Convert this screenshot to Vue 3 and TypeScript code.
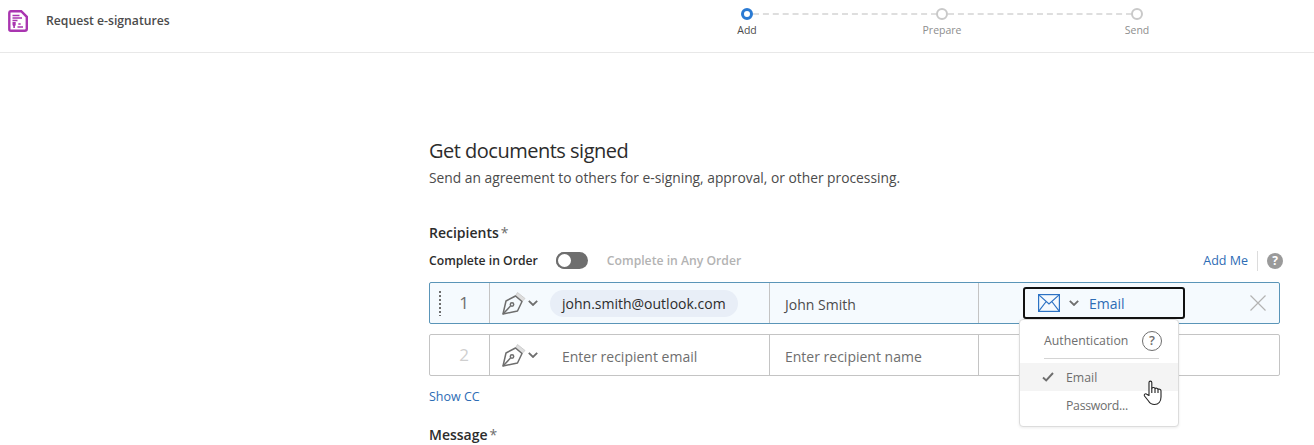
<script setup lang="ts">
const steps = [
  { label: 'Add', active: true },
  { label: 'Prepare', active: false },
  { label: 'Send', active: false },
]
</script>

<template>
  <div class="page">
    <header class="topbar">
      <svg class="doc-icon" width="20" height="22" viewBox="0 0 20 22" fill="none">
        <path d="M2.700 1.200h10.500l5.600 5.600v12a2 2 0 0 1-2 2h-14a1.500 1.500 0 0 1-1.500-1.500v-16.600a1.500 1.500 0 0 1 1.400-1.500z" stroke="#a935b0" stroke-width="2.400" fill="#fff" />
        <path d="M4.500 5.500h7M4.500 8h9.500M4.500 10.500h5M9.500 17h5.500" stroke="#a935b0" stroke-width="1.300" />
        <path d="M4.500 12h3.200v3l-.8 1.200v1.800h-1.600v-1.800l-.8-1.200z" fill="#a935b0" />
        <path d="M10.500 13l2 2M12.500 13l-2 2" stroke="#a935b0" stroke-width="1" />
      </svg>
      <span class="title">Request e-signatures</span>
      <div class="stepper">
        <div v-for="(s, i) in steps" :key="s.label" class="step" :class="{ on: s.active, last: i === steps.length - 1 }">
          <span class="dot"></span>
          <span class="step-label">{{ s.label }}</span>
        </div>
      </div>
    </header>

    <main class="content">
      <h1>Get documents signed</h1>
      <p class="sub">Send an agreement to others for e-signing, approval, or other processing.</p>

      <div class="section-label recipients">Recipients<span class="star">*</span></div>

      <div class="order-row">
        <span class="order on">Complete in Order</span>
        <span class="toggle"><span class="knob"></span></span>
        <span class="order off">Complete in Any Order</span>
        <div class="order-right">
          <a class="link add-me">Add Me</a>
          <span class="help-fill">?</span>
        </div>
      </div>

      <div class="row selected">
        <div class="cell num">
          <span class="grip"></span>
          <span class="n">1</span>
        </div>
        <div class="cell email">
          <svg class="pen" width="24" height="24" viewBox="0 0 24 24" fill="none" stroke="#6e6e6e" stroke-width="1.500">
            <path d="M13.500 5l2-3.500 7.500 6-3 3z" fill="#dedede" stroke="#cfcfcf" stroke-width="1" stroke-linejoin="round" />
            <path d="M1 23L4 10l9.500-5 6.500 5.500L15.500 20z" stroke-linejoin="round" />
            <path d="M1 23l7.500-8" />
            <circle cx="10" cy="13.500" r="1.700" />
          </svg>
          <svg class="chev" width="10" height="6" viewBox="0 0 10 6" fill="none"><path d="M.8.800L5 5 9.200.8" stroke="#6e6e6e" stroke-width="1.800" /></svg>
          <span class="chip">john.smith@outlook.com</span>
        </div>
        <div class="cell name"><span class="value">John Smith</span></div>
        <div class="cell auth">
          <svg class="close" width="16" height="16" viewBox="0 0 16 16" fill="none"><path d="M.5.500l15 15M15.500.5L.5 15.500" stroke="#b3b3b3" stroke-width="1.200" /></svg>
        </div>

        <div class="auth-button">
          <svg width="22" height="18" viewBox="0 0 22 18" fill="none" stroke="#2c72c4" stroke-width="1.200">
            <rect x=".6" y=".6" width="20.800" height="16.800" />
            <path d="M.6.600L11 10 21.400.6M.6 17.400l7.600-9.900M21.400 17.400l-7.600-9.900" />
          </svg>
          <svg class="chev" width="10" height="6" viewBox="0 0 10 6" fill="none"><path d="M.8.800L5 5 9.200.8" stroke="#6e6e6e" stroke-width="1.800" /></svg>
          <span class="auth-text">Email</span>
        </div>

        <div class="menu">
          <div class="menu-head">
            <span>Authentication</span>
            <span class="help-line">?</span>
          </div>
          <div class="menu-item hover">
            <svg width="12" height="10" viewBox="0 0 12 10" fill="none"><path d="M1 5.500l3.200 3L11 1" stroke="#6e6e6e" stroke-width="1.900" /></svg>
            <span>Email</span>
            <svg class="hand" width="20" height="26" viewBox="0 0 20 26" fill="#fff" stroke="#222" stroke-width="1.100" stroke-linejoin="round">
              <path d="M6 15.500V2.500a1.400 1.400 0 0 1 2.800 0V8c.8-.8 3-.8 3.200.5.800-.6 2.800-.5 3 .8.800-.4 3-.2 3 1.500V17c0 4.500-2.500 7.500-6.500 7.500-3 0-4.500-1-6-3.500L1.500 16c-.9-1.500.9-3 2.200-1.800z" />
              <path d="M8.800 8v5M12 8.500V13M15 9.300V13" fill="none" />
            </svg>
          </div>
          <div class="menu-item"><span class="spacer"></span><span class="password">Password...</span></div>
        </div>
      </div>

      <div class="row second">
        <div class="cell num"><span class="n faint">2</span></div>
        <div class="cell email">
          <svg class="pen" width="24" height="24" viewBox="0 0 24 24" fill="none" stroke="#6e6e6e" stroke-width="1.500">
            <path d="M13.500 5l2-3.500 7.500 6-3 3z" fill="#dedede" stroke="#cfcfcf" stroke-width="1" stroke-linejoin="round" />
            <path d="M1 23L4 10l9.500-5 6.500 5.500L15.500 20z" stroke-linejoin="round" />
            <path d="M1 23l7.500-8" />
            <circle cx="10" cy="13.500" r="1.700" />
          </svg>
          <svg class="chev" width="10" height="6" viewBox="0 0 10 6" fill="none"><path d="M.8.800L5 5 9.200.8" stroke="#6e6e6e" stroke-width="1.800" /></svg>
          <span class="placeholder">Enter recipient email</span>
        </div>
        <div class="cell name"><span class="value placeholder-name">Enter recipient name</span></div>
        <div class="cell auth"></div>
      </div>

      <a class="link show-cc">Show CC</a>
      <div class="section-label message">Message<span class="star">*</span></div>
    </main>
  </div>
</template>

<style>
html, body { margin: 0; background: #fff; overflow: hidden; }
</style>

<style scoped>
.page {
  width: 1314px;
  height: 445px;
  overflow: hidden;
  font-family: "Open Sans", "Noto Sans", sans-serif;
  color: #2c2c2c;
  background: #fff;
}
.topbar {
  height: 52px;
  border-bottom: 1px solid #e8e8e8;
  display: flex;
  align-items: flex-start;
  position: relative;
}
.doc-icon { margin: 10px 0 0 8px; flex: none; }
.title {
  width: 130px;
  margin: 12px 0 0 18px;
  font-size: 12.200px;
  font-weight: 600;
  line-height: 17px;
  color: #4b4b4b;
}
.stepper {
  margin-left: 565px;
  display: flex;
  margin-top: 8px;
}
.step {
  width: 195px;
  height: 40px;
  position: relative;
  display: flex;
  flex-direction: column;
}
.step.last { width: 60px; }
.step::after {
  content: "";
  position: absolute;
  left: 12px;
  right: -1px;
  top: 5px;
  border-top: 2px dashed #dedede;
}
.step.last::after { display: none; }
.dot {
  width: 12px;
  height: 12px;
  box-sizing: border-box;
  border: 2.500px solid #c9c9c9;
  border-radius: 50%;
}
.step.on .dot { border: 3px solid #2a7ad3; }
.step-label {
  position: absolute;
  top: 15px;
  left: 6px;
  transform: translateX(-50%);
  font-size: 10.500px;
  line-height: 15px;
  color: #8e8e8e;
}
.step.on .step-label { color: #4b4b4b; }

.content {
  margin-left: 429px;
  width: 851px;
  padding-top: 85px;
}
h1 {
  margin: 0;
  font-size: 20px;
  font-weight: 400;
  letter-spacing: -0.5px;
  line-height: 26px;
  color: #2c2c2c;
}
.sub {
  margin: 4px 0 0;
  font-size: 13.800px;
  line-height: 19px;
  color: #4b4b4b;
}
.section-label {
  font-size: 14px;
  font-weight: 600;
  line-height: 19px;
  color: #2c2c2c;
}
.star { font-weight: 400; color: #6e6e6e; margin-left: 2px; }
.recipients { margin-top: 36px; }
.order-row {
  display: flex;
  align-items: center;
  height: 20px;
  margin-top: 8px;
  font-size: 12.200px;
  font-weight: 600;
}
.order.on { color: #2c2c2c; }
.order.off { color: #b3b3b3; }
.toggle {
  width: 32px;
  height: 17px;
  margin: 0 19px 0 18px;
  background: #6e6e6e;
  border-radius: 9px;
  position: relative;
}
.knob {
  position: absolute;
  left: 0;
  top: 0;
  width: 13px;
  height: 13px;
  border: 2px solid #6e6e6e;
  border-radius: 50%;
  background: #fff;
}
.order-right {
  margin-left: auto;
  display: flex;
  align-items: center;
  margin-top: 2px;
  margin-right: -3px;
}
.link {
  color: #2d6cb5;
  font-weight: 400;
  font-size: 12.500px;
  line-height: 17px;
}
.add-me {
  padding-right: 9px;
  border-right: 1px solid #dcdcdc;
  line-height: 20px;
}
.help-fill {
  margin-left: 9px;
  width: 16px;
  height: 16px;
  border-radius: 50%;
  background: #9a9a9a;
  color: #fff;
  font-size: 12px;
  font-weight: 700;
  line-height: 16px;
  text-align: center;
}
.row {
  display: flex;
  box-sizing: border-box;
  height: 42px;
  border: 1px solid #c4c4c4;
  border-radius: 2px;
  position: relative;
}
.row.selected {
  margin-top: 12px;
  border-color: #5a95b8;
  background: #f5fafe;
}
.row.second { margin-top: 10px; }
.cell {
  box-sizing: border-box;
  display: flex;
  align-items: center;
  border-right: 1px solid #c4c4c4;
}
.num { width: 60px; position: relative; justify-content: center; }
.email { width: 280px; padding-left: 12px; }
.name { width: 209px; padding-left: 15px; }
.auth { flex: 1; border-right: 0; justify-content: flex-end; padding-right: 13px; }
.grip {
  position: absolute;
  left: 9px;
  top: 8px;
  height: 25px;
  width: 2px;
  background-image: repeating-linear-gradient(#6e6e6e 0 2px, transparent 2px 4px);
}
.n { font-size: 17px; color: #6e6e6e; line-height: 24px; margin-left: 9px; }
.n.faint { color: #cfcfcf; }
.pen { flex: none; }
.chev { flex: none; margin-left: 2px; }
.chip {
  margin-left: 12px;
  height: 27px;
  line-height: 28px;
  padding: 0 12px;
  border-radius: 14px;
  background: #e8eef7;
  font-size: 14px;
  color: #2c2c2c;
}
.value, .placeholder {
  padding-top: 2px;
  font-size: 14px;
  color: #4b4b4b;
}
.placeholder { margin-left: 24px; color: #6e6e6e; }
.placeholder-name { color: #6e6e6e; }
.auth-button {
  position: absolute;
  left: 593px;
  top: 4px;
  box-sizing: border-box;
  width: 162px;
  height: 32px;
  border: 2px solid #111;
  border-radius: 3px;
  background: #f5fafe;
  display: flex;
  align-items: center;
  padding-left: 13px;
  z-index: 3;
}
.auth-button .chev { margin-left: 9px; }
.auth-text {
  margin-left: 10px;
  font-size: 14px;
  color: #2d6cb5;
}
.menu {
  position: absolute;
  left: 589px;
  top: 36px;
  box-sizing: border-box;
  width: 160px;
  height: 108px;
  background: #fff;
  border: 1px solid #dcdcdc;
  border-radius: 4px;
  box-shadow: 0 1px 3px rgba(0, 0, 0, 0.08);
  z-index: 2;
  font-size: 12.300px;
  color: #6e6e6e;
}
.menu-head {
  box-sizing: border-box;
  margin: 0 19px 0 24px;
  height: 39px;
  padding-top: 3px;
  display: flex;
  align-items: center;
  justify-content: space-between;
  border-bottom: 1px solid #d4d4d4;
}
.help-line {
  box-sizing: border-box;
  width: 20px;
  height: 20px;
  margin-right: -3px;
  border: 1.500px solid #6e6e6e;
  border-radius: 50%;
  font-size: 13px;
  font-weight: 600;
  line-height: 17px;
  text-align: center;
}
.menu-item {
  height: 28px;
  display: flex;
  align-items: center;
  padding-left: 22px;
  position: relative;
  gap: 12px;
}
.menu-item.hover { margin-top: 4px; background: #f4f4f4; }
.spacer { width: 12px; }
.password { letter-spacing: -0.3px; }
.hand { position: absolute; left: 123px; top: 17px; z-index: 3; }
.close { flex: none; }
.show-cc { display: block; margin-top: 12px; }
.message { margin-top: 20px; }
</style>
